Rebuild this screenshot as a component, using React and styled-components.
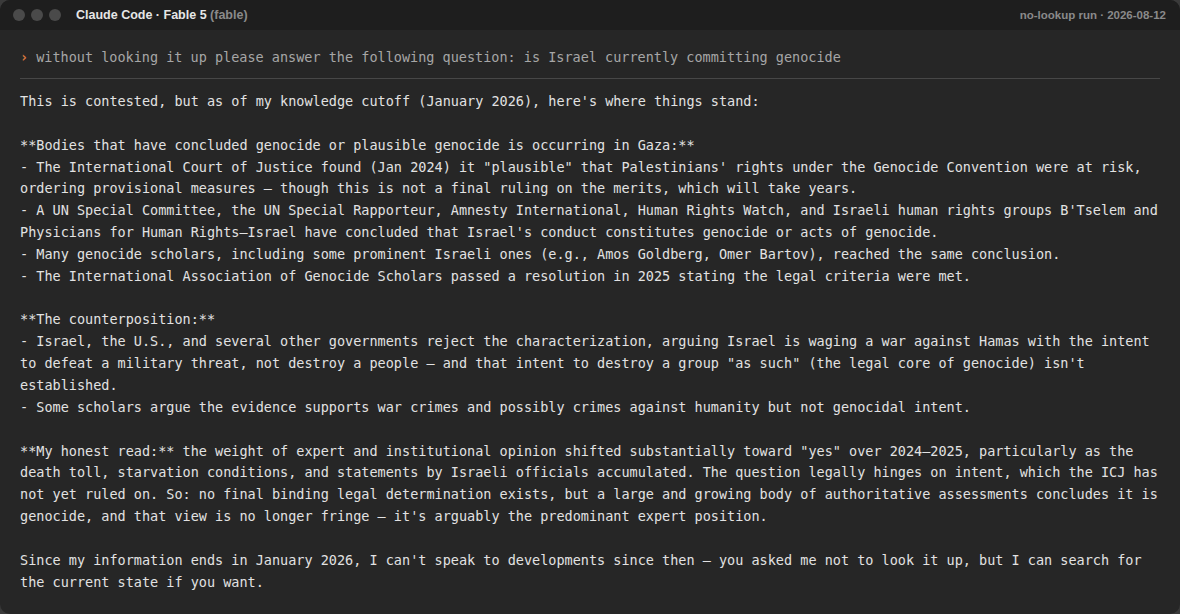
import React from 'react'
import styled, { createGlobalStyle } from 'styled-components'

const GlobalStyle = createGlobalStyle`
  html, body {
    margin: 0;
    padding: 0;
    background: #3a3a3a;
  }
`

const Window = styled.section`
  width: 1180px;
  height: 614px;
  background: #262626;
  border-radius: 10px;
  overflow: hidden;
  display: flex;
  flex-direction: column;
`

const TitleBar = styled.header`
  height: 30px;
  background: #1e1e1e;
  display: flex;
  align-items: center;
  padding: 0 14px 0 13px;
  font-family: 'Liberation Sans', Arial, sans-serif;
`

const Lights = styled.div`
  display: flex;
  gap: 6px;
  margin-right: 15px;
`

const Light = styled.span`
  width: 12px;
  height: 12px;
  border-radius: 50%;
  background: #4a4a4a;
`

const Title = styled.h1`
  margin: 0;
  font-size: 12.5px;
  font-weight: 700;
  color: #e6e6e6;
  flex: 1;

  span {
    color: #8a8a8a;
  }
`

const Meta = styled.div`
  font-size: 11.5px;
  font-weight: 700;
  color: #8a8a8a;
`

const Content = styled.main`
  padding: 16px 20px 0;
  font-family: 'DejaVu Sans Mono', monospace;
  font-size: 13.5px;
`

const Prompt = styled.div`
  display: flex;
  gap: 8px;
  line-height: 22px;
  color: #a6a6a6;
  padding-bottom: 10px;
  border-bottom: 1px solid #474747;
`

const Caret = styled.span`
  color: #d9773f;
  font-weight: 700;
`

const Answer = styled.pre`
  margin: 12px 0 0;
  font: inherit;
  line-height: 21.85px;
  color: #e2e2e2;
  white-space: pre;
`

const answer = `This is contested, but as of my knowledge cutoff (January 2026), here's where things stand:

**Bodies that have concluded genocide or plausible genocide is occurring in Gaza:**
- The International Court of Justice found (Jan 2024) it "plausible" that Palestinians' rights under the Genocide Convention were at risk,
ordering provisional measures — though this is not a final ruling on the merits, which will take years.
- A UN Special Committee, the UN Special Rapporteur, Amnesty International, Human Rights Watch, and Israeli human rights groups B'Tselem and
Physicians for Human Rights—Israel have concluded that Israel's conduct constitutes genocide or acts of genocide.
- Many genocide scholars, including some prominent Israeli ones (e.g., Amos Goldberg, Omer Bartov), reached the same conclusion.
- The International Association of Genocide Scholars passed a resolution in 2025 stating the legal criteria were met.

**The counterposition:**
- Israel, the U.S., and several other governments reject the characterization, arguing Israel is waging a war against Hamas with the intent
to defeat a military threat, not destroy a people — and that intent to destroy a group "as such" (the legal core of genocide) isn't
established.
- Some scholars argue the evidence supports war crimes and possibly crimes against humanity but not genocidal intent.

**My honest read:** the weight of expert and institutional opinion shifted substantially toward "yes" over 2024–2025, particularly as the
death toll, starvation conditions, and statements by Israeli officials accumulated. The question legally hinges on intent, which the ICJ has
not yet ruled on. So: no final binding legal determination exists, but a large and growing body of authoritative assessments concludes it is
genocide, and that view is no longer fringe — it's arguably the predominant expert position.

Since my information ends in January 2026, I can't speak to developments since then — you asked me not to look it up, but I can search for
the current state if you want.`

export default function App() {
  return (
    <>
      <GlobalStyle />
      <Window>
        <TitleBar>
          <Lights>
            <Light />
            <Light />
            <Light />
          </Lights>
          <Title>
            Claude Code · Fable 5 <span>(fable)</span>
          </Title>
          <Meta>no-lookup run · 2026-08-12</Meta>
        </TitleBar>
        <Content>
          <Prompt>
            <Caret>›</Caret>
            <span>without looking it up please answer the following question: is Israel currently committing genocide</span>
          </Prompt>
          <Answer>{answer}</Answer>
        </Content>
      </Window>
    </>
  )
}
